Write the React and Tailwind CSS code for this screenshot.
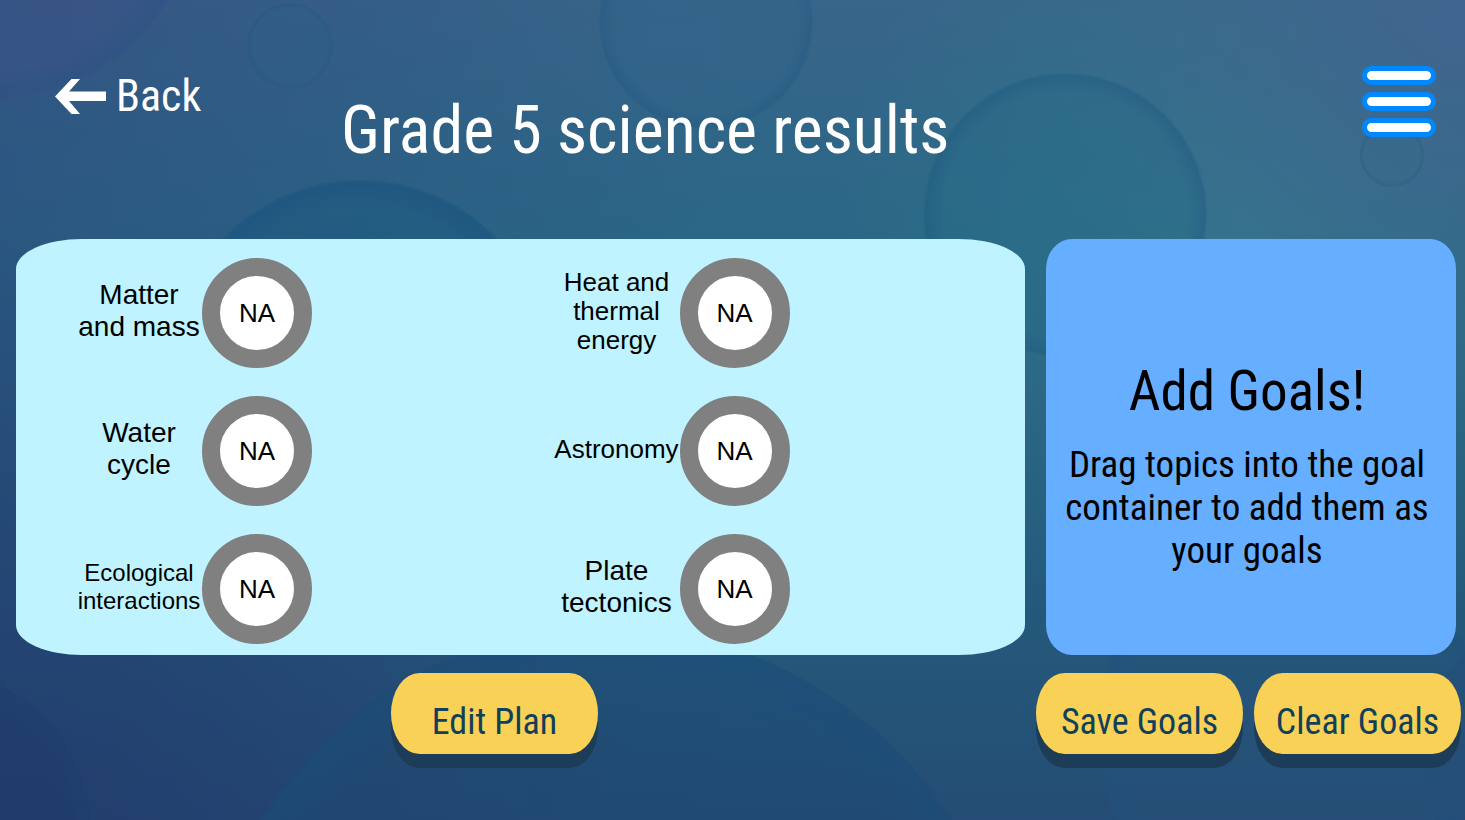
const topics = [
  { lines: ['Matter', 'and mass'], size: 'text-[28px] leading-8' },
  { lines: ['Heat and', 'thermal', 'energy'], size: 'text-[26px] leading-[29px]' },
  { lines: ['Water', 'cycle'], size: 'text-[28px] leading-8' },
  { lines: ['Astronomy'], size: 'text-[26px] leading-[29px]' },
  { lines: ['Ecological', 'interactions'], size: 'text-2xl leading-7' },
  { lines: ['Plate', 'tectonics'], size: 'text-[28px] leading-8' },
];

// Large soft bubbles drifting over a blue-green gradient.
const bubbles = [
  { cx: -10, cy: -110, r: 210, fill: '#3c5288', tint: 0.5, rim: 0.5 },
  { cx: 290, cy: 46, r: 43, fill: '#2d6088', tint: 0.3, rim: 0.5 },
  { cx: 706, cy: 22, r: 107, fill: '#2d6488', tint: 0.3, rim: 0.5 },
  { cx: 1065, cy: 215, r: 142, fill: '#256a88', tint: 0.3, rim: 0.6 },
  { cx: 1392, cy: 155, r: 32, fill: '#34698c', tint: 0.3, rim: 0.5 },
  { cx: 360, cy: 370, r: 190, fill: '#1c5a80', tint: 0.5, rim: 0.8 },
  { cx: 605, cy: 1036, r: 408, fill: '#1c4a72', tint: 0.45, rim: 0.8 },
  { cx: -70, cy: 830, r: 160, fill: '#1f3a6c', tint: 0.5, rim: 0.3 },
  { cx: 1290, cy: 730, r: 195, fill: '#28527a', tint: 0.4, rim: 0.6 },
  { cx: 1540, cy: 750, r: 122, fill: '#284e78', tint: 0.4, rim: 0.5 },
];

function Backdrop() {
  return (
    <svg
      className="absolute inset-0 -z-10 h-full w-full"
      viewBox="0 0 1465 820"
      preserveAspectRatio="xMidYMid slice"
      aria-hidden="true"
    >
      <defs>
        <linearGradient id="base" x1="0" y1="0" x2="0" y2="1">
          <stop offset="0" stopColor="#38658a" />
          <stop offset="0.28" stopColor="#2a6786" />
          <stop offset="0.55" stopColor="#265f80" />
          <stop offset="0.8" stopColor="#24577a" />
          <stop offset="1" stopColor="#254c74" />
        </linearGradient>
        <linearGradient id="left" x1="0" y1="0" x2="1" y2="0">
          <stop offset="0" stopColor="#2a3f78" stopOpacity="0.4" />
          <stop offset="0.5" stopColor="#2a3f78" stopOpacity="0" />
        </linearGradient>
        <radialGradient id="deep" gradientUnits="userSpaceOnUse" cx="0" cy="860" r="620">
          <stop offset="0" stopColor="#1f3868" stopOpacity="0.7" />
          <stop offset="1" stopColor="#1f3868" stopOpacity="0" />
        </radialGradient>
        <radialGradient id="teal" gradientUnits="userSpaceOnUse" cx="1250" cy="230" r="420">
          <stop offset="0" stopColor="#35788d" stopOpacity="0.8" />
          <stop offset="1" stopColor="#35788d" stopOpacity="0" />
        </radialGradient>
        <radialGradient id="corner" gradientUnits="userSpaceOnUse" cx="1465" cy="0" r="420">
          <stop offset="0" stopColor="#42658f" stopOpacity="0.9" />
          <stop offset="1" stopColor="#42658f" stopOpacity="0" />
        </radialGradient>
        <radialGradient id="rim">
          <stop offset="0.86" stopColor="#1a507e" stopOpacity="0" />
          <stop offset="0.98" stopColor="#1a507e" stopOpacity="0.5" />
          <stop offset="1" stopColor="#1a507e" stopOpacity="0.1" />
        </radialGradient>
      </defs>
      <rect width="1465" height="820" fill="url(#base)" />
      <rect width="1465" height="820" fill="url(#left)" />
      <rect width="1465" height="820" fill="url(#deep)" />
      <rect width="1465" height="820" fill="url(#teal)" />
      <rect width="1465" height="820" fill="url(#corner)" />
      {bubbles.map((b) => (
        <g key={`${b.cx}-${b.cy}`}>
          <circle cx={b.cx} cy={b.cy} r={b.r} fill={b.fill} opacity={b.tint} />
          <circle cx={b.cx} cy={b.cy} r={b.r} fill="url(#rim)" opacity={b.rim} />
        </g>
      ))}
    </svg>
  );
}

function GameButton({ children }) {
  return (
    <button
      type="button"
      className="h-[81px] w-[207px] cursor-pointer rounded-[29px/41px] bg-[#f9d156] pt-4 text-4xl leading-[48px] whitespace-nowrap text-[#10405a] shadow-[0_14px_0_#1d3c58]"
    >
      {children}
    </button>
  );
}

function Topic({ lines, size }) {
  return (
    <li className="flex items-center">
      <div className={`w-[126px] shrink-0 pb-1 text-center whitespace-nowrap ${size}`}>
        {lines.map((line) => (
          <div key={line}>{line}</div>
        ))}
      </div>
      <div className="flex size-[110px] shrink-0 items-center justify-center rounded-full border-[18px] border-[#808080] bg-white text-[26px] leading-none">
        NA
      </div>
    </li>
  );
}

export default function App() {
  return (
    <main className="relative isolate flex min-h-screen flex-col overflow-hidden font-['Roboto_Condensed','Roboto',sans-serif]">
      <Backdrop />
      <header className="grid grid-cols-[23.4%_1fr_auto] items-start pt-[66px] pr-[29px] pb-[68px] text-white">
        <a href="#back" className="flex items-center gap-[10px] pt-[2px] pl-[55px] text-[44px] leading-[56px]">
          <svg className="h-9 w-[51px]" viewBox="0 0 51 36" fill="#fff" aria-hidden="true">
            <path d="M0 18.500 16.500 1H25L14 13.500H51V23H14L25 36H16.500Z" />
          </svg>
          Back
        </a>
        <h1 className="pt-[25px] pl-[5px] text-[66px] leading-[80px] whitespace-nowrap">
          Grade 5 science results
        </h1>
        <button type="button" aria-label="Menu" className="flex cursor-pointer flex-col gap-[7px]">
          <span className="h-[19px] w-[74px] rounded-full border-[5px] border-[#0088ff] bg-white" />
          <span className="h-[19px] w-[74px] rounded-full border-[5px] border-[#0088ff] bg-white" />
          <span className="h-[19px] w-[74px] rounded-full border-[5px] border-[#0088ff] bg-white" />
        </button>
      </header>

      <div className="grid grid-cols-[1009fr_410fr] gap-[21px] pr-[9px] pl-4 text-black">
        <ul className="grid grid-cols-2 gap-x-[6px] gap-y-7 rounded-[66px/30px] bg-[#bff3ff] pt-[19px] pb-[11px] pl-[60px] font-['Liberation_Sans',Arial,sans-serif]">
          {topics.map((topic) => (
            <Topic key={topic.lines[0]} {...topic} />
          ))}
        </ul>
        <section className="flex flex-col items-center rounded-[26px/30px] bg-[#66aeff] pt-[116px] pr-4 pl-2 text-center">
          <h2 className="text-[55px] leading-[72px]">Add Goals!</h2>
          <p className="pt-4 text-[37px] leading-[43px] whitespace-nowrap">
            Drag topics into the goal
            <br />
            container to add them as
            <br />
            your goals
          </p>
        </section>
      </div>

      <footer className="flex pt-[18px] pr-1 pb-[66px]">
        <div className="flex flex-1 justify-center pr-[47px]">
          <GameButton>Edit Plan</GameButton>
        </div>
        <div className="flex gap-[11px]">
          <GameButton>Save Goals</GameButton>
          <GameButton>Clear Goals</GameButton>
        </div>
      </footer>
    </main>
  );
}
